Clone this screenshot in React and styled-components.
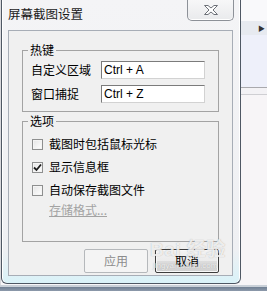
import React from 'react';
import styled, { createGlobalStyle } from 'styled-components';

const GlobalStyle = createGlobalStyle`
  html, body {
    margin: 0;
    padding: 0;
    background: #f7f6f8;
  }
  * {
    box-sizing: border-box;
  }
`;

const UI_FONT = `"Noto Sans CJK SC", "Liberation Sans", sans-serif`;

const Screen = styled.div`
  position: relative;
  width: 267px;
  height: 291px;
  overflow: hidden;
  display: flex;
  flex-direction: column;
  background: #f7f6f8;
  font-family: ${UI_FONT};
  font-size: 12px;
  color: #000;
`;

const Desk = styled.div`
  display: flex;
  height: 285px;
`;

const Gutter = styled.div`
  width: 1px;
  background: #d8d8dc;
`;

const Window = styled.div`
  width: 240px;
  height: 284px;
  display: flex;
  flex-direction: column;
  border: 1px solid #4f5864;
  border-top: none;
  border-radius: 0 0 6px 6px;
  background: linear-gradient(to bottom, #f4f4f6 0%, #eff0f3 88%, #d9f2f8 100%);
  padding-bottom: 7px;
  box-shadow: inset 1px 0 0 #ffffff, inset -1px 0 0 #ffffff;
`;

const TitleBar = styled.div`
  height: 30px;
  display: flex;
  align-items: flex-start;
`;

const Title = styled.div`
  padding: 6px 0 0 6px;
  font-size: 12.5px;
  line-height: 16px;
  color: #1a1a1a;
`;

const CloseButton = styled.div`
  margin-left: auto;
  margin-right: 6px;
  width: 47px;
  height: 21px;
  display: flex;
  align-items: center;
  justify-content: center;
  border: 1px solid #8d9198;
  border-top: none;
  border-radius: 0 0 5px 5px;
  background: linear-gradient(to bottom, #f7f7f8, #e9eaec);
  box-shadow: inset 0 -1px 0 #ffffff;
`;

const Client = styled.div`
  margin: 0 7px 0 6px;
  height: 246px;
  border: 1px solid #a7adb6;
  background: #f0f0f0;
  padding: 12px 13px 0 13px;
  display: flex;
  flex-direction: column;
`;

const Group = styled.fieldset`
  margin: ${(p) => p.$top}px 0 0 0;
  padding: ${(p) => p.$padTop}px 8px ${(p) => p.$padBottom}px 8px;
  border: 1px solid #a3a3a3;
  border-radius: 0;
  min-width: 0;
  display: flex;
  flex-direction: column;
  gap: ${(p) => p.$gap}px;
`;

const Legend = styled.legend`
  margin-left: -3px;
  padding: 0 2px;
  line-height: 14px;
  font-size: 12px;
`;

const FieldRow = styled.div`
  display: flex;
  align-items: center;
  height: 18px;
`;

const FieldLabel = styled.span`
  width: 70px;
  line-height: 14px;
`;

const TextBox = styled.div`
  width: 104px;
  height: 18px;
  border: 1px solid;
  border-color: #7b7b7b #d2d2d2 #d2d2d2 #7b7b7b;
  background: #ffffff;
  padding-left: 2px;
  font-family: "Liberation Sans", sans-serif;
  font-size: 12px;
  line-height: 16px;
`;

const CheckRow = styled.div`
  display: flex;
  align-items: center;
  height: 16px;
`;

const Box = styled.span`
  width: 11px;
  height: 11px;
  margin: 0 6px 0 1px;
  border: 1px solid #8e8f8f;
  background: linear-gradient(135deg, #e4e4e4, #ffffff);
  box-shadow: inset 0 0 0 1px #f4f4f4;
  display: flex;
  align-items: center;
  justify-content: center;
`;

const CheckText = styled.span`
  line-height: 14px;
`;

const LinkText = styled.span`
  margin: -2px 0 0 18px;
  line-height: 14px;
  color: #a3a3a3;
  text-decoration: underline;
`;

const Buttons = styled.div`
  margin-top: 7px;
  display: flex;
  justify-content: flex-end;
  gap: 7px;
`;

const Button = styled.div`
  width: 64px;
  height: 24px;
  display: flex;
  align-items: center;
  justify-content: center;
  border-radius: 2px;
  border: 1px solid ${(p) => (p.$disabled ? '#b5b8bb' : '#3d3d3d')};
  background: ${(p) =>
    p.$disabled ? '#f4f4f4' : 'linear-gradient(to bottom, #f3f3f3 0%, #ebebeb 50%, #dddddd 51%, #d0d0d0 100%)'};
  box-shadow: ${(p) => (p.$disabled ? 'none' : 'inset 0 0 0 1px #f8f8f8')};
  color: ${(p) => (p.$disabled ? '#8c8c8c' : '#000')};
  line-height: 14px;
`;

const Side = styled.div`
  flex: 1;
  display: flex;
  flex-direction: column;
`;

const SideBlock = styled.div`
  height: ${(p) => p.$h}px;
  flex: ${(p) => (p.$grow ? 1 : 'none')};
  background: ${(p) => p.$bg};
  border-bottom: ${(p) => (p.$line ? `1px solid ${p.$line}` : 'none')};
  display: flex;
  align-items: center;
  justify-content: flex-end;
  padding-right: 2px;
  font-size: 7px;
  color: #333;
`;

const BottomBar = styled.div`
  flex: 1;
  background: linear-gradient(to bottom, #c9d0d8 0%, #c9d0d8 30%, #6f7f92 31%, #8d9aab 100%);
`;

const Watermark = styled.div`
  position: absolute;
  left: 150px;
  top: 239px;
  display: flex;
  flex-direction: column;
  align-items: flex-start;
  color: rgba(255, 255, 255, 0.8);
  text-shadow: 0 0 1px rgba(110, 110, 110, 0.55);
  pointer-events: none;
`;

const MarkMain = styled.div`
  font-family: "Liberation Sans", "Noto Sans CJK SC", sans-serif;
  font-weight: bold;
  font-size: 19px;
  line-height: 22px;
  letter-spacing: 0.5px;
`;

const MarkSub = styled.div`
  font-family: "Liberation Sans", sans-serif;
  font-size: 8px;
  line-height: 9px;
  margin-left: 3px;
`;

function CloseGlyph() {
  return (
    <svg width="16" height="10" viewBox="0 0 16 10">
      <path
        d="M1.5 0.5 H5 L8 3 L11 0.5 H14.5 L10 5 L14.5 9.5 H11 L8 7 L5 9.5 H1.5 L6 5 Z"
        fill="#ffffff"
        stroke="#6d7178"
        strokeWidth="1"
        strokeLinejoin="round"
      />
    </svg>
  );
}

function Check() {
  return (
    <svg width="9" height="9" viewBox="0 0 9 9">
      <path d="M1 4.5 L3.5 7 L8 1.5" fill="none" stroke="#1b1b1b" strokeWidth="1.8" />
    </svg>
  );
}

function Option({ checked, children }) {
  return (
    <CheckRow>
      <Box>{checked && <Check />}</Box>
      <CheckText>{children}</CheckText>
    </CheckRow>
  );
}

export default function App() {
  return (
    <>
      <GlobalStyle />
      <Screen>
        <Desk>
          <Gutter />
          <Window>
            <TitleBar>
              <Title>屏幕截图设置</Title>
              <CloseButton>
                <CloseGlyph />
              </CloseButton>
            </TitleBar>
            <Client>
              <Group $top={0} $padTop={4} $padBottom={8} $gap={6}>
                <Legend>热键</Legend>
                <FieldRow>
                  <FieldLabel>自定义区域</FieldLabel>
                  <TextBox>Ctrl + A</TextBox>
                </FieldRow>
                <FieldRow>
                  <FieldLabel>窗口捕捉</FieldLabel>
                  <TextBox>Ctrl + Z</TextBox>
                </FieldRow>
              </Group>
              <Group $top={2} $padTop={8} $padBottom={24} $gap={7}>
                <Legend>选项</Legend>
                <Option>截图时包括鼠标光标</Option>
                <Option checked>显示信息框</Option>
                <Option>自动保存截图文件</Option>
                <LinkText>存储格式...</LinkText>
              </Group>
              <Buttons>
                <Button $disabled>应用</Button>
                <Button>取消</Button>
              </Buttons>
            </Client>
          </Window>
          <Side>
            <SideBlock $h={21} $bg="#f9f9fb" />
            <SideBlock $h={14} $bg="#e7eaf0">▶</SideBlock>
            <SideBlock $h={53} $bg="#eef0fa" $line="#a9a9ad" />
            <SideBlock $h={7} $bg="#f3f2f5" $line="#cfcfd3" />
            <SideBlock $grow $bg="#f7f5f7" />
          </Side>
        </Desk>
        <BottomBar />
        <Watermark>
          <MarkMain>Bai 经验</MarkMain>
          <MarkSub>jingyan.baidu.com</MarkSub>
        </Watermark>
      </Screen>
    </>
  );
}
